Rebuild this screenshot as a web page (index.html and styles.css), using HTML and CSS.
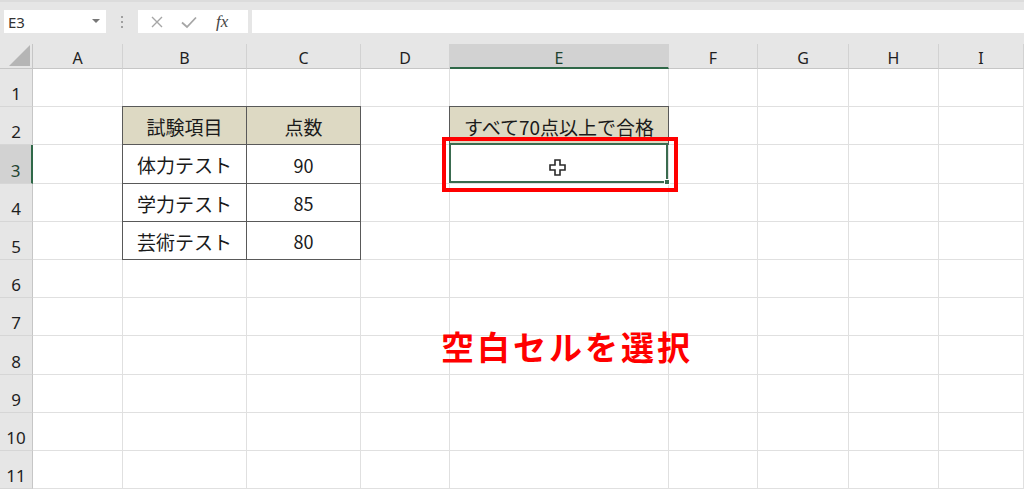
FILE: index.html
```html
<!DOCTYPE html>
<html lang="ja">
<head>
    <meta charset="UTF-8">
    <meta name="viewport" content="width=device-width, initial-scale=1.0">
    <title>空白セルを選択</title>
    <link rel="stylesheet" href="styles.css">
</head>
<body>
    <div class="barra">
        <div class="nombre">
            <span>E3</span>
            <span class="flecha"></span>
        </div>
        <div class="asa"><i></i><i></i><i></i></div>
        <div class="botones-fx">
            <svg class="ico" width="16" height="16" viewBox="0 0 16 16">
                <path d="M3 3 L13 13 M13 3 L3 13" stroke="#a6a6a6" stroke-width="1.4" fill="none"/>
            </svg>
            <svg class="ico" width="18" height="16" viewBox="0 0 18 16">
                <path d="M2 8.5 L7 13 L16 3.5" stroke="#a6a6a6" stroke-width="1.8" fill="none"/>
            </svg>
            <span class="fx">fx</span>
        </div>
        <div class="formula"></div>
    </div>

    <div class="hoja">
        <div class="rejilla">
            <div class="esquina"><span class="triangulo"></span></div>
            <div class="ch">A</div><div class="ch">B</div><div class="ch">C</div><div class="ch">D</div>
            <div class="ch activa">E</div><div class="ch">F</div><div class="ch">G</div><div class="ch">H</div><div class="ch">I</div>

            <div class="rh">1</div>
            <div class="c"></div><div class="c"></div><div class="c"></div><div class="c"></div><div class="c"></div><div class="c"></div><div class="c"></div><div class="c"></div><div class="c"></div>

            <div class="rh">2</div>
            <div class="c"></div>
            <div class="c t esq titulo">試験項目</div>
            <div class="c t arriba titulo">点数</div>
            <div class="c"></div>
            <div class="c t esq titulo">すべて70点以上で合格</div>
            <div class="c"></div><div class="c"></div><div class="c"></div><div class="c"></div>

            <div class="rh activa">3</div>
            <div class="c"></div>
            <div class="c t izq">体力テスト</div>
            <div class="c t num">90</div>
            <div class="c"></div>
            <div class="c sel"><div class="marco"><span class="tirador"></span></div></div>
            <div class="c"></div><div class="c"></div><div class="c"></div><div class="c"></div>

            <div class="rh">4</div>
            <div class="c"></div>
            <div class="c t izq">学力テスト</div>
            <div class="c t num">85</div>
            <div class="c"></div><div class="c"></div><div class="c"></div><div class="c"></div><div class="c"></div><div class="c"></div>

            <div class="rh">5</div>
            <div class="c"></div>
            <div class="c t izq">芸術テスト</div>
            <div class="c t num">80</div>
            <div class="c"></div><div class="c"></div><div class="c"></div><div class="c"></div><div class="c"></div><div class="c"></div>

            <div class="rh">6</div>
            <div class="c"></div><div class="c"></div><div class="c"></div><div class="c"></div><div class="c"></div><div class="c"></div><div class="c"></div><div class="c"></div><div class="c"></div>
            <div class="rh">7</div>
            <div class="c"></div><div class="c"></div><div class="c"></div><div class="c"></div><div class="c"></div><div class="c"></div><div class="c"></div><div class="c"></div><div class="c"></div>
            <div class="rh">8</div>
            <div class="c"></div><div class="c"></div><div class="c"></div><div class="c"></div><div class="c"></div><div class="c"></div><div class="c"></div><div class="c"></div><div class="c"></div>
            <div class="rh">9</div>
            <div class="c"></div><div class="c"></div><div class="c"></div><div class="c"></div><div class="c"></div><div class="c"></div><div class="c"></div><div class="c"></div><div class="c"></div>
            <div class="rh">10</div>
            <div class="c"></div><div class="c"></div><div class="c"></div><div class="c"></div><div class="c"></div><div class="c"></div><div class="c"></div><div class="c"></div><div class="c"></div>
            <div class="rh">11</div>
            <div class="c"></div><div class="c"></div><div class="c"></div><div class="c"></div><div class="c"></div><div class="c"></div><div class="c"></div><div class="c"></div><div class="c"></div>
        </div>

        <div class="recuadro"></div>
        <svg class="cursor" width="17" height="17" viewBox="0 0 17 17">
            <path d="M6 1 H11 V6 H16 V11 H11 V16 H6 V11 H1 V6 H6 Z" fill="#fff" stroke="#2a2a2a" stroke-width="1.6"/>
        </svg>
        <div class="nota">空白セルを選択</div>
    </div>
</body>
</html>
```

FILE: styles.css
```css
* {
    box-sizing: border-box;
}
body {
    margin: 0;
    width: 1024px;
    height: 489px;
    overflow: hidden;
    background-color: #ffffff;
    font-family: "Noto Sans CJK JP", "Noto Sans", sans-serif;
    color: #1a1a1a;
}

/* barra de formulas */
.barra {
    display: flex;
    align-items: stretch;
    height: 44px;
    padding: 8px 0 11px 4px;
    background-color: #e6e6e6;
    border-top: 2px solid #dcdcdc;
}
.nombre {
    width: 102px;
    background: #fff;
    display: flex;
    align-items: center;
    justify-content: space-between;
    padding: 0 6px 0 4px;
    font-family: "Noto Sans", sans-serif;
    font-size: 15px;
    color: #333;
}
.flecha {
    width: 0;
    height: 0;
    border-left: 4px solid transparent;
    border-right: 4px solid transparent;
    border-top: 4px solid #777;
    margin-top: -2px;
}
.asa {
    width: 32px;
    display: flex;
    flex-direction: column;
    align-items: center;
    justify-content: center;
    gap: 3px;
}
.asa i {
    width: 2px;
    height: 2px;
    background: #a0a0a0;
}
.botones-fx {
    width: 110px;
    background: #fff;
    display: flex;
    align-items: center;
    padding-left: 11px;
    gap: 15px;
}
.fx {
    font-family: "Liberation Serif", serif;
    font-style: italic;
    font-size: 17px;
    color: #444;
    margin-left: 3px;
}
.formula {
    flex: 1;
    margin-left: 4px;
    background: #fff;
}

/* hoja */
.hoja {
    position: relative;
    height: 445px;
}
.rejilla {
    display: grid;
    grid-template-columns: 33px 90px 124px 114px 89px 219px 89px 91px 90px 1fr;
    grid-template-rows: 25px repeat(11, 38.2px);
}
.esquina {
    background: #e6e6e6;
    border-right: 1px solid #c6c6c6;
    border-bottom: 1px solid #c6c6c6;
    position: relative;
}
.triangulo {
    position: absolute;
    right: 2px;
    bottom: 2px;
    width: 0;
    height: 0;
    border-left: 21px solid transparent;
    border-bottom: 21px solid #b5b5b5;
}
.ch {
    background: #e6e6e6;
    border-right: 1px solid #d2d2d2;
    border-bottom: 1px solid #c6c6c6;
    display: flex;
    justify-content: center;
    align-items: center;
    padding-top: 4px;
    font-family: "Noto Sans", sans-serif;
    font-size: 16px;
    color: #1f1f1f;
}
.rh {
    background: #e6e6e6;
    border-right: 1px solid #c6c6c6;
    border-bottom: 1px solid #d6d6d6;
    display: flex;
    justify-content: center;
    align-items: flex-end;
    padding-bottom: 1px;
    font-family: "Noto Sans", sans-serif;
    font-size: 17px;
    color: #1f1f1f;
}
.ch.activa {
    background: #d2d2d2;
    border-bottom: 2px solid #2f6848;
    color: #1f4430;
}
.rh.activa {
    background: #d2d2d2;
    border-right: 2px solid #2f6848;
    color: #1f4430;
}
.c {
    border-right: 1px solid #e0e0e0;
    border-bottom: 1px solid #e0e0e0;
    display: flex;
    justify-content: center;
    align-items: center;
    padding-top: 2px;
    font-size: 19px;
}

/* tabla */
.t {
    border-right-color: #595959;
    border-bottom-color: #595959;
}
.izq {
    box-shadow: -1px 0 0 #595959;
}
.arriba {
    box-shadow: 0 -1px 0 #595959;
}
.esq {
    box-shadow: -1px 0 0 #595959, 0 -1px 0 #595959, -1px -1px 0 #595959;
}
.titulo {
    background: #ddd9c3;
}
.num {
    font-size: 18px;
}

/* celda seleccionada */
.sel {
    position: relative;
}
.marco {
    position: absolute;
    top: -2px;
    left: -1px;
    right: 0;
    bottom: 0;
    border: 2px solid #3a6b4f;
}
.tirador {
    position: absolute;
    right: -4px;
    bottom: -4px;
    width: 6px;
    height: 6px;
    background: #3a6b4f;
    border: 1px solid #fff;
}

/* anotaciones */
.recuadro {
    position: absolute;
    left: 442px;
    top: 93px;
    width: 236px;
    height: 55px;
    border: 4px solid #ff0000;
}
.cursor {
    position: absolute;
    left: 549px;
    top: 115px;
}
.nota {
    position: absolute;
    left: 441px;
    top: 286px;
    font-size: 33px;
    line-height: 1;
    font-weight: bold;
    letter-spacing: 3px;
    color: #ff0000;
}
```
